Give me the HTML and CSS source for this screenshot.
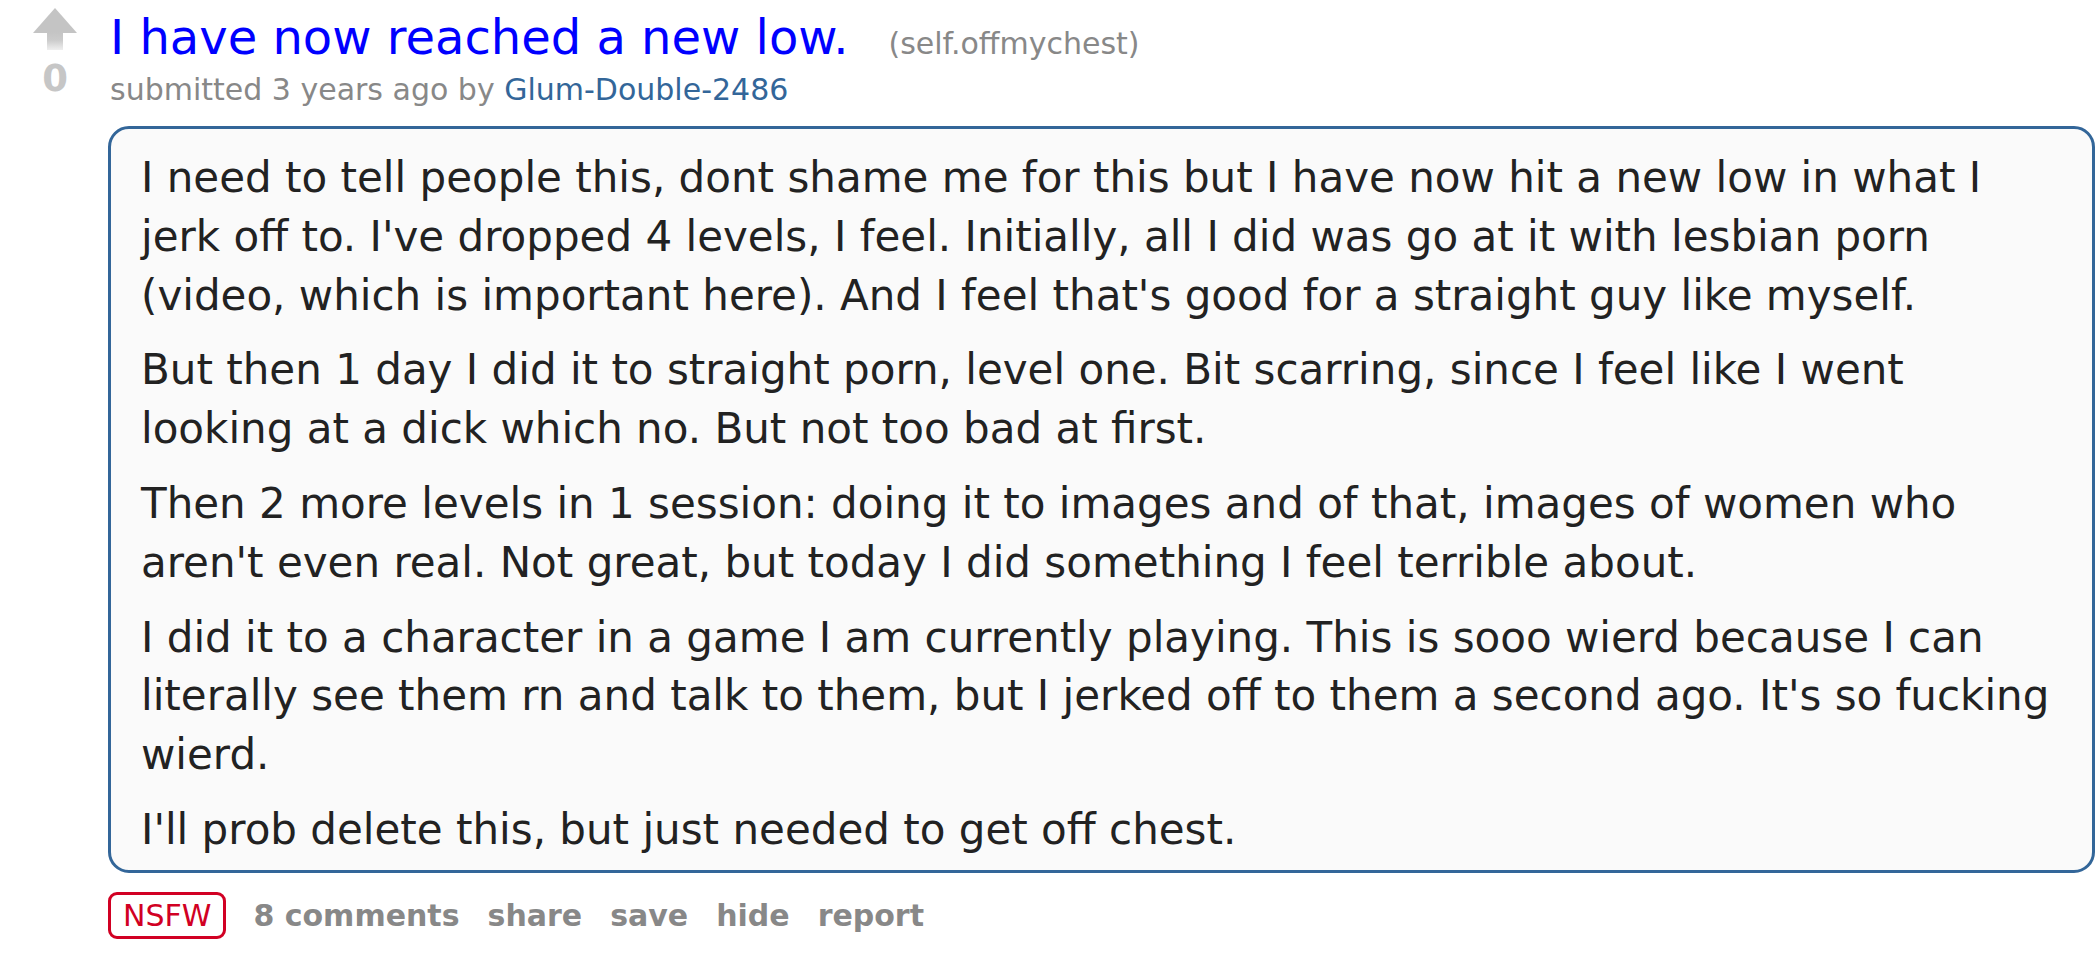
FILE: index.html
```html
<!DOCTYPE html>
<html>
<head>
<meta charset="utf-8">
<link rel="stylesheet" href="styles.css">
</head>
<body>
<div class="thing">
  <div class="midcol">
    <svg class="arrow" width="44" height="42" viewBox="0 0 44 42">
      <defs>
        <linearGradient id="stem" x1="0" y1="0" x2="0" y2="1">
          <stop offset="0" stop-color="#c4c4c4"/>
          <stop offset="0.45" stop-color="#cbcbcb"/>
          <stop offset="1" stop-color="#efefef"/>
        </linearGradient>
      </defs>
      <polygon points="22,0 44,25 0,25" fill="#c4c4c4"/>
      <rect x="14" y="24" width="16" height="18" fill="url(#stem)"/>
    </svg>
    <div class="score">0</div>
  </div>
  <div class="entry">
    <p class="title"><a class="title-link" href="#">I have now reached a new low.</a><span class="domain">(<a href="#">self.offmychest</a>)</span></p>
    <p class="tagline">submitted 3 years ago by <a class="author" href="#">Glum-Double-2486</a></p>
    <div class="usertext-body">
      <p>I need to tell people this, dont shame me for this but I have now hit a new low in what I jerk off to. I've dropped 4 levels, I feel. Initially, all I did was go at it with lesbian porn (video, which is important here). And I feel that's good for a straight guy like myself.</p>
      <p>But then 1 day I did it to straight porn, level one. Bit scarring, since I feel like I went looking at a dick which no. But not too bad at first.</p>
      <p>Then 2 more levels in 1 session: doing it to images and of that, images of women who aren't even real. Not great, but today I did something I feel terrible about.</p>
      <p>I did it to a character in a game I am currently playing. This is sooo wierd because I can literally see them rn and talk to them, but I jerked off to them a second ago. It's so fucking wierd.</p>
      <p>I'll prob delete this, but just needed to get off chest.</p>
    </div>
    <ul class="buttons">
      <li class="nsfw-item"><span class="nsfw">NSFW</span></li>
      <li><a href="#">8 comments</a></li>
      <li><a href="#">share</a></li>
      <li><a href="#">save</a></li>
      <li><a href="#">hide</a></li>
      <li><a href="#">report</a></li>
    </ul>
  </div>
</div>
</body>
</html>
```

FILE: styles.css
```css
html, body {
  margin: 0;
  padding: 0;
  background: #ffffff;
}

body {
  font-family: "DejaVu Sans", Verdana, sans-serif;
  color: #222222;
}

a {
  text-decoration: none;
}

.thing {
  display: flex;
  flex-direction: row;
  align-items: flex-start;
}

.midcol {
  width: 108px;
  flex: 0 0 108px;
  display: flex;
  flex-direction: column;
  align-items: center;
  padding-top: 8px;
  padding-left: 2px;
  box-sizing: border-box;
}

.arrow {
  display: block;
}

.score {
  font-weight: bold;
  font-size: 37px;
  line-height: 44px;
  color: #c6c6c6;
  margin-top: 7px;
}

.entry {
  flex: 1 1 auto;
  padding-right: 5px;
  min-width: 0;
}

.title {
  margin: 0;
  padding-top: 9px;
  font-size: 48px;
  line-height: 56px;
  white-space: nowrap;
}

.title-link {
  color: #0000ff;
  padding-left: 2px;
}

.domain {
  font-size: 30px;
  line-height: 30px;
  color: #888888;
  margin-left: 40px;
}

.domain a {
  color: #888888;
}

.tagline {
  margin: 7px 0 0 2px;
  font-size: 30px;
  line-height: 35px;
  color: #888888;
}

.author {
  color: #336699;
}

.usertext-body {
  margin-top: 19px;
  background: #fafafa;
  border: 3px solid #336699;
  border-radius: 21px;
  padding: 20px 30px 10px;
  font-size: 42px;
  line-height: 58.8px;
  color: #222222;
}

.usertext-body p {
  margin: 0 0 16px 0;
}

.usertext-body p:last-child {
  margin-bottom: 0;
}

.buttons {
  list-style: none;
  margin: 19px 0 0 0;
  padding: 0;
  display: flex;
  align-items: center;
  gap: 28px;
}

.buttons li {
  font-size: 30px;
}

.buttons .nsfw-item {
  margin-right: -1px;
}

.buttons a {
  color: #888888;
  font-weight: bold;
}

.nsfw {
  display: inline-block;
  color: #d10023;
  border: 3px solid #d10023;
  border-radius: 9px;
  padding: 1px 12px 0;
  line-height: 40px;
  font-size: 30px;
}
```
